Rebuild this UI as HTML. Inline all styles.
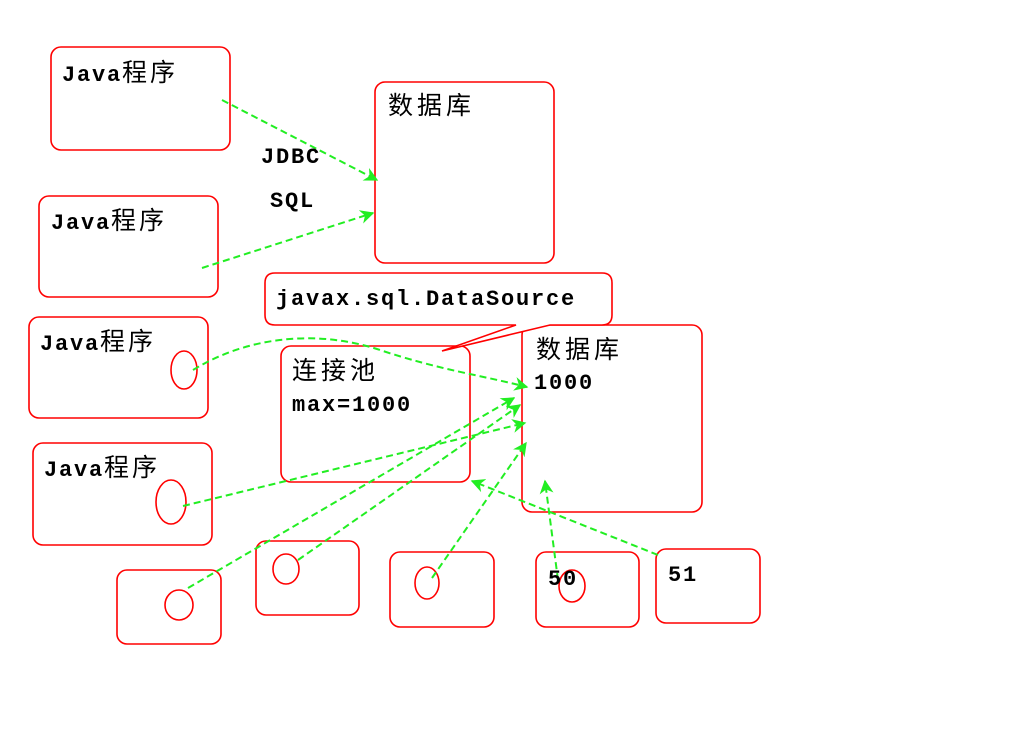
<!DOCTYPE html>
<html><head><meta charset="utf-8"><style>
html,body{margin:0;padding:0;background:#fff;width:1024px;height:738px;overflow:hidden}
svg text{font-family:"Liberation Mono","Noto Sans CJK SC",monospace;font-size:22px;fill:#000;letter-spacing:1.8px}
svg text.c{font-family:"Noto Sans CJK SC",sans-serif;font-size:25px;letter-spacing:4px;font-weight:normal}
svg tspan.k{font-family:"Noto Sans CJK SC",sans-serif;font-size:25px;letter-spacing:3px;font-weight:normal}
</style></head><body>
<svg width="1024" height="738" xmlns="http://www.w3.org/2000/svg">
<defs>
<marker id="a" viewBox="0 0 10 10" refX="9" refY="5" markerWidth="7" markerHeight="7" orient="auto"><path d="M0,0 L10,5 L0,10 L3,5 z" fill="#22ee22"/></marker>
</defs>
<g fill="#fff" stroke="#f00" stroke-width="1.6">
<rect x="51" y="47" width="179" height="103" rx="10"/>
<rect x="375" y="82" width="179" height="181" rx="10"/>
<rect x="39" y="196" width="179" height="101" rx="10"/>
<rect x="29" y="317" width="179" height="101" rx="10"/>
<rect x="281" y="346" width="189" height="136" rx="10"/>
<rect x="522" y="325" width="180" height="187" rx="10"/>
<rect x="33" y="443" width="179" height="102" rx="10"/>
<rect x="117" y="570" width="104" height="74" rx="10"/>
<rect x="256" y="541" width="103" height="74" rx="10"/>
<rect x="390" y="552" width="104" height="75" rx="10"/>
<rect x="536" y="552" width="103" height="75" rx="10"/>
<rect x="656" y="549" width="104" height="74" rx="10"/>
<path d="M275,273 H602 Q612,273 612,283 V315 Q612,325 602,325 H550 L442,351 L516,325 H275 Q265,325 265,315 V283 Q265,273 275,273 Z"/>
<ellipse cx="184" cy="370" rx="13" ry="19"/>
<ellipse cx="171" cy="502" rx="15" ry="22"/>
<ellipse cx="179" cy="605" rx="14" ry="15"/>
<ellipse cx="286" cy="569" rx="13" ry="15"/>
<ellipse cx="427" cy="583" rx="12" ry="16"/>
<ellipse cx="572" cy="586" rx="13" ry="16"/>
</g>
<g fill="none" stroke="#22ee22" stroke-width="2" stroke-dasharray="7,4" marker-end="url(#a)">
<path d="M222,100 L377,180"/>
<path d="M202,268 L373,213"/>
<path d="M193,370 C250,335 320,330 380,350 S480,375 527,387"/>
<path d="M183,506 L525,423"/>
<path d="M188,588 L514,398"/>
<path d="M298,560 L520,405"/>
<path d="M432,578 L526,443"/>
<path d="M558,580 L545,481"/>
<path d="M658,555 L472,481"/>
</g>
<g font-weight="bold">
<text x="62" y="81">Java<tspan class="k">程序</tspan></text>
<text x="51" y="229">Java<tspan class="k">程序</tspan></text>
<text x="40" y="350">Java<tspan class="k">程序</tspan></text>
<text x="44" y="476">Java<tspan class="k">程序</tspan></text>
<text x="261" y="163">JDBC</text>
<text x="270" y="207">SQL</text>
<text x="276" y="305">javax.sql.DataSource</text>
<text x="292" y="411">max=1000</text>
<text x="534" y="389">1000</text>
<text x="548" y="585">50</text>
<text x="668" y="581">51</text>
</g>
<text class="c" x="388" y="114">数据库</text>
<text class="c" x="292" y="379">连接池</text>
<text class="c" x="536" y="358">数据库</text>
</svg>
</body></html>
